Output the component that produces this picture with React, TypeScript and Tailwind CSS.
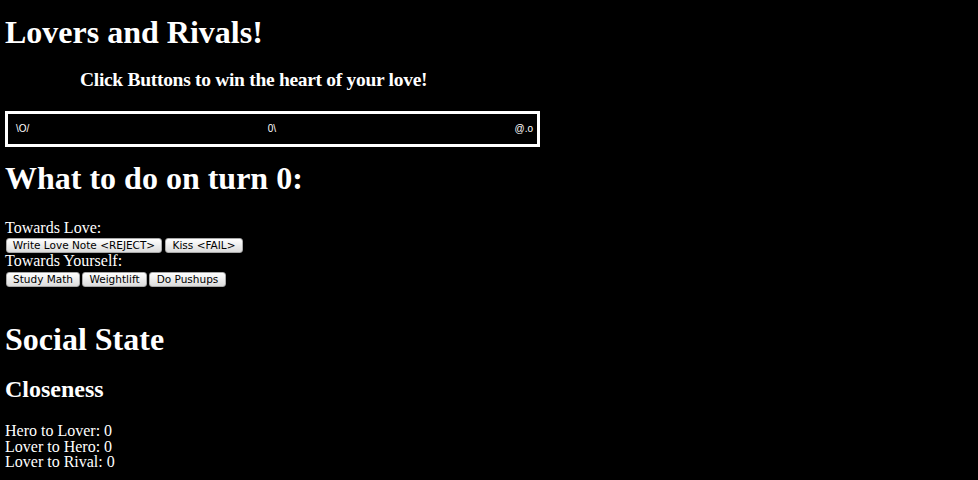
const serif = "font-['Liberation_Serif','Times_New_Roman',serif]";

function GameButton({ label, width }: { label: string; width: string }) {
  return (
    <button
      className={`${width} h-[15px] shrink-0 flex items-center justify-center rounded-[3px] border border-[#a8a8a8] bg-gradient-to-b from-white to-[#dcdcdc] text-black font-['DejaVu_Sans','Lucida_Grande',sans-serif] text-[10.5px] leading-none whitespace-nowrap`}
    >
      {label}
    </button>
  );
}

function Track() {
  return (
    <div className="mt-[19px] w-[535px] h-[36px] border-[3px] border-white flex items-center justify-between pl-[8px] pr-[4px] font-['Liberation_Sans',Arial,sans-serif] text-[10px] leading-none">
      <span>\O/</span>
      <span>0\</span>
      <span>@.o</span>
    </div>
  );
}

export default function App() {
  return (
    <div className={`min-h-screen w-full bg-black text-white pl-[5px] pt-[14px] ${serif}`}>
      <h1 className="text-[32px] font-bold leading-[36px]">Lovers and Rivals!</h1>
      <h3 className="mt-[18px] ml-[75px] text-[19.5px] font-bold leading-[24px] tracking-[-0.3px]">
        Click Buttons to win the heart of your love!
      </h3>
      <Track />

      <h1 className="mt-[13px] text-[32px] font-bold leading-[36px]">What to do on turn 0:</h1>
      <div className="mt-[24px] text-[16px] leading-[16px]">Towards Love:</div>
      <div className="pt-[2px] ml-[1px] flex gap-[3px]">
        <GameButton label="Write Love Note <REJECT>" width="w-[156px]" />
        <GameButton label="Kiss <FAIL>" width="w-[78px]" />
      </div>
      <div className="text-[16px] leading-[16px]">Towards Yourself:</div>
      <div className="pt-[3px] ml-[1px] flex gap-[2px]">
        <GameButton label="Study Math" width="w-[74px]" />
        <GameButton label="Weightlift" width="w-[65px]" />
        <GameButton label="Do Pushups" width="w-[77px]" />
      </div>

      <h1 className="mt-[34px] text-[32px] font-bold leading-[36px]">Social State</h1>
      <h2 className="mt-[18px] text-[24px] font-bold leading-[28px]">Closeness</h2>
      <div className="mt-[20px] text-[16px] leading-[15.5px]">
        <div>Hero to Lover: 0</div>
        <div>Lover to Hero: 0</div>
        <div>Lover to Rival: 0</div>
      </div>
    </div>
  );
}
